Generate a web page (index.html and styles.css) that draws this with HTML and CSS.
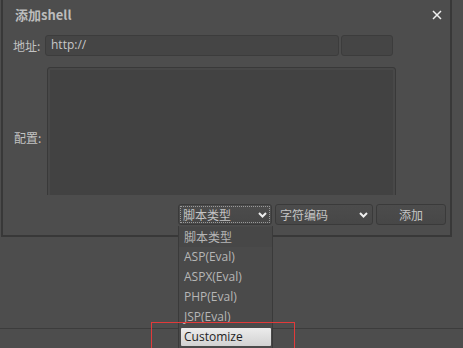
FILE: index.html
```html
<!DOCTYPE html>
<html lang="zh">
<head>
<meta charset="utf-8">
<link rel="stylesheet" href="styles.css">
</head>
<body>
<div class="dialog">
  <div class="titlebar">
    <span class="title">添加shell</span>
    <svg class="close" width="10" height="10" viewBox="0 0 10 10"><path d="M1 1L9 9M9 1L1 9" stroke="#f0f0f0" stroke-width="1.5" fill="none"/></svg>
  </div>
  <div class="row url-row">
    <span class="label">地址:</span>
    <div class="input url">http://</div>
    <div class="input pass"></div>
  </div>
  <div class="row config-row">
    <span class="label cfg-label">配置:</span>
    <div class="clip"><div class="textarea"></div></div>
  </div>
  <div class="actions">
    <div class="select focused"><span class="inner">脚本类型<svg class="chev" width="9" height="6" viewBox="0 0 9 6"><path d="M1 1L4.5 4.5L8 1" stroke="#eee" stroke-width="2" fill="none"/></svg></span></div>
    <div class="select enc"><span class="inner">字符编码<svg class="chev" width="9" height="6" viewBox="0 0 9 6"><path d="M1 1L4.5 4.5L8 1" stroke="#eee" stroke-width="2" fill="none"/></svg></span></div>
    <div class="btn">添加</div>
  </div>
</div>
<div class="statusbar"></div>
<ul class="dropdown">
  <li>脚本类型</li>
  <li>ASP(Eval)</li>
  <li>ASPX(Eval)</li>
  <li>PHP(Eval)</li>
  <li>JSP(Eval)</li>
  <li class="active">Customize</li>
</ul>
<div class="mark"></div>
</body>
</html>
```
FILE: styles.css
```css
html, body {
  margin: 0;
  padding: 0;
  background: #4d4d4d;
  width: 463px;
  height: 348px;
  overflow: hidden;
  font-family: "Noto Sans CJK SC", "Noto Sans", sans-serif;
  font-size: 12px;
  color: #bdbdbd;
}
body { position: relative; }
.dialog {
  box-sizing: border-box;
  margin-left: 1px;
  width: 451px;
  height: 238px;
  border: 2px solid #383838;
  border-top: none;
  padding: 0 0 0 10px;
  background: #4d4d4d;
}
.titlebar {
  height: 30px;
  display: flex;
  align-items: center;
  justify-content: space-between;
  padding: 0 8px 0 2px;
  margin-top: -1px;
}
.title {
  font-weight: bold;
  font-size: 13px;
  color: #bcbcbc;
}
.close { margin-top: 2px; }
.row { display: flex; }
.url-row {
  margin-top: 6px;
  height: 21px;
  align-items: center;
}
.label {
  width: 32px;
  font-size: 12px;
  color: #c2c2c2;
}
.input {
  box-sizing: border-box;
  height: 21px;
  background: #454545;
  border: 1px solid #3c3c3c;
  border-radius: 3px;
  padding-left: 5px;
  line-height: 18px;
  font-family: "Open Sans", "Noto Sans", sans-serif;
  font-size: 12px;
  color: #c8c8c8;
}
.url { width: 294px; }
.pass { width: 52px; margin-left: 2px; }
.config-row {
  margin-top: 11px;
  align-items: flex-start;
}
.cfg-label {
  margin-left: 1px;
  width: 33px;
  margin-top: 62px;
}
.clip {
  height: 128px;
  overflow: hidden;
}
.textarea {
  box-sizing: border-box;
  width: 349px;
  height: 150px;
  background: #424242;
  border: 1px solid #393939;
  box-shadow: inset 0 0 0 2px #484848;
  border-radius: 3px;
}
.actions {
  display: flex;
  margin-top: 9px;
  margin-left: 165px;
  gap: 3px;
  height: 21px;
}
.select, .btn {
  box-sizing: border-box;
  height: 21px;
  border: 1px solid #3a3a3a;
  border-radius: 3px;
  background: linear-gradient(#4c4c4c, #474747);
  color: #c4c4c4;
  font-size: 12px;
}
.select { padding: 1px; }
.select .inner {
  box-sizing: border-box;
  display: flex;
  align-items: center;
  justify-content: space-between;
  height: 17px;
  padding: 0 1px 0 2px;
  border: 1px dotted transparent;
}
.select.focused .inner { border-color: #9a9a9a; }
.select.focused { width: 94px; }
.select.enc { width: 98px; }
.chev { margin-right: 1px; }
.btn {
  width: 70px;
  display: flex;
  align-items: center;
  justify-content: center;
}
.statusbar {
  margin-top: 91px;
  border-top: 1px solid #3c3c3c;
  height: 20px;
}
.dropdown {
  position: absolute;
  left: 178px;
  top: 226px;
  width: 95px;
  height: 130px;
  margin: 0;
  padding: 1px 0 0;
  list-style: none;
  box-sizing: border-box;
  background: #4a4a4a;
  border: 1px solid #3a3a3a;
  border-top: none;
}
.dropdown li {
  height: 20px;
  line-height: 20px;
  padding-left: 5px;
  font-family: "Open Sans", "Noto Sans", "Noto Sans CJK SC", sans-serif;
  font-size: 12px;
  color: #b6b6b6;
}
.dropdown li:first-child {
  font-family: "Noto Sans CJK SC", sans-serif;
  background: #474747;
}
.dropdown li.active {
  margin: 1px 1px 0 2px;
  height: 18px;
  line-height: 18px;
  padding-left: 3px;
  background: linear-gradient(#ececec, #d2d2d2);
  color: #1e1e1e;
  border-radius: 1px;
}
.mark {
  position: absolute;
  left: 151px;
  top: 322px;
  width: 142px;
  height: 40px;
  border: 1px solid #e23a3a;
}
```
